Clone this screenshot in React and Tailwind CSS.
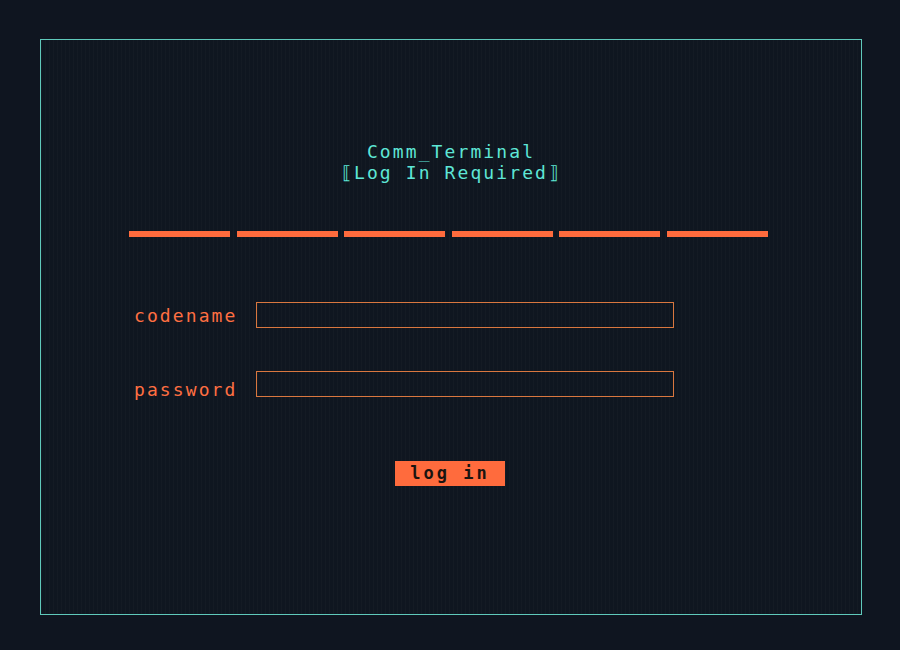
import React from 'react';

const mono = { fontFamily: '"DejaVu Sans Mono", "Liberation Mono", monospace' };

const Field = ({ label, type, shift }) => (
  <div className="flex items-center h-[26px]">
    <label className={`w-[122px] text-[18px] tracking-[2.1px] text-[#ff6f42] ${shift ? 'translate-y-[5px]' : ''}`}>
      {label}
    </label>
    <input
      type={type}
      className="w-[418px] h-[26px] border border-[#d9773f] bg-transparent outline-none text-[#ff6f42] px-2"
      style={mono}
    />
  </div>
);

export default function App() {
  const bars = [0, 1, 2, 3, 4, 5];
  return (
    <div className="w-[900px] h-[650px] overflow-hidden bg-[#0f1520] pt-[39px] pl-[40px]" style={mono}>
      <div className="w-[822px] h-[576px] border border-[#5fc9bb] bg-[#0f1620] bg-[repeating-linear-gradient(90deg,rgba(255,255,255,0.018)_0px,rgba(255,255,255,0.018)_1px,transparent_1px,transparent_4px)] flex flex-col">
        <div className="mt-[101px] text-center text-[#5ee6d6] text-[18px] leading-[21px] tracking-[2.1px]">
          <div>Comm_Terminal</div>
          <div>⟦Log In Required⟧</div>
        </div>

        <div className="mt-[48px] ml-[88px] flex gap-[6.5px]">
          {bars.map((b) => (
            <div key={b} className="w-[101px] h-[6px] bg-[#ff6b3d]" />
          ))}
        </div>

        <div className="mt-[65px] ml-[93px] flex flex-col gap-[43px]">
          <Field label="codename" type="text" />
          <Field label="password" type="password" shift />
        </div>

        <div className="mt-[64px] flex justify-center pr-[2px]">
          <button className="w-[110px] h-[25px] bg-[#ff6b3d] text-[#1b1410] text-[17px] font-bold tracking-[3px] leading-[25px]" style={mono}>
            log in
          </button>
        </div>
      </div>
    </div>
  );
}
